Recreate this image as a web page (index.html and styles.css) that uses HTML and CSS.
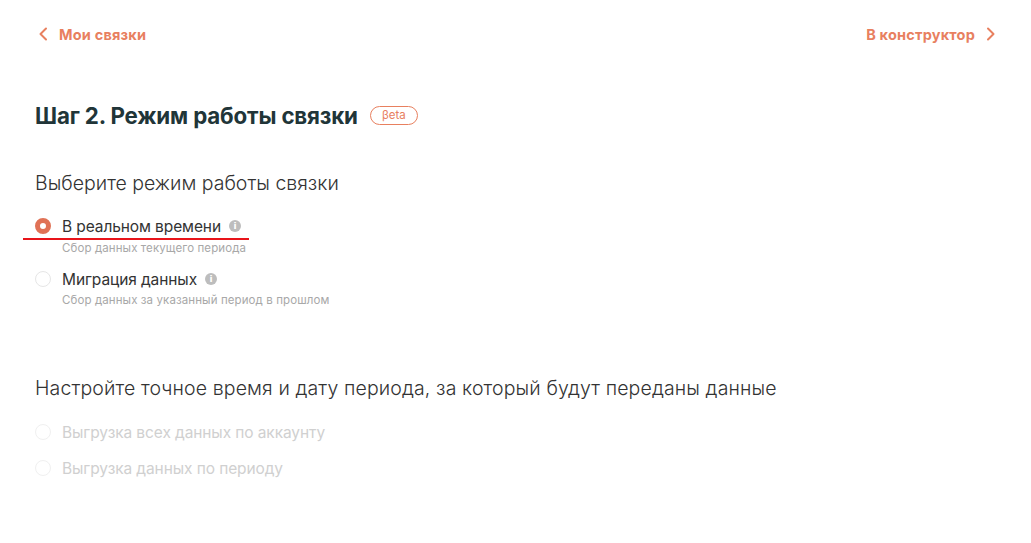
FILE: index.html
```html
<!DOCTYPE html>
<html lang="ru">
<head>
<meta charset="utf-8">
<link rel="stylesheet" href="styles.css">
</head>
<body>
<div class="page">
  <nav class="topnav">
    <a class="navlink" href="#">
      <svg class="chev" width="10" height="14" viewBox="0 0 10 14"><path d="M8 1.5 L2.5 7 L8 12.5" fill="none" stroke="currentColor" stroke-width="2" stroke-linecap="round" stroke-linejoin="round"/></svg>
      <span>Мои связки</span>
    </a>
    <a class="navlink" href="#">
      <span>В конструктор</span>
      <svg class="chev" width="10" height="14" viewBox="0 0 10 14"><path d="M2 1.5 L7.5 7 L2 12.5" fill="none" stroke="currentColor" stroke-width="2" stroke-linecap="round" stroke-linejoin="round"/></svg>
    </a>
  </nav>

  <h1 class="title">Шаг 2. Режим работы связки <span class="beta">βeta</span></h1>

  <section class="group">
    <h2 class="subtitle">Выберите режим работы связки</h2>
    <div class="option">
      <div class="option-row">
        <span class="radio checked"></span>
        <span class="label">В реальном времени</span>
        <span class="info">i</span>
      </div>
      <div class="underline"></div>
      <div class="hint">Сбор данных текущего периода</div>
    </div>
    <div class="option second">
      <div class="option-row">
        <span class="radio"></span>
        <span class="label">Миграция данных</span>
        <span class="info">i</span>
      </div>
      <div class="hint">Сбор данных за указанный период в прошлом</div>
    </div>
  </section>

  <section class="group disabled">
    <h2 class="subtitle wide">Настройте точное время и дату периода, за который будут переданы данные</h2>
    <div class="option-row dis">
      <span class="radio"></span>
      <span class="label">Выгрузка всех данных по аккаунту</span>
    </div>
    <div class="option-row dis">
      <span class="radio"></span>
      <span class="label">Выгрузка данных по периоду</span>
    </div>
  </section>
</div>
</body>
</html>
```

FILE: styles.css
```css
* { box-sizing: border-box; }
html, body { margin: 0; padding: 0; background: #fff; }
body {
  font-family: "Inter", "Noto Sans", sans-serif;
  color: #333;
}
.page {
  padding: 0 35px;
}
.topnav {
  display: flex;
  justify-content: space-between;
  align-items: center;
  height: 68px;
  padding: 0 0 0 3px;
}
.navlink {
  display: flex;
  align-items: center;
  gap: 11px;
  color: #e8805f;
  font-weight: 700;
  font-size: 14.5px;
  text-decoration: none;
  letter-spacing: 0.2px;
}
.chev { display: block; }
.title {
  margin: 33px 0 0;
  font-size: 22.3px;
  font-weight: 700;
  color: #213538;
  display: flex;
  align-items: center;
  gap: 12px;
  height: 28px;
  letter-spacing: -0.15px;
}
.beta {
  display: inline-flex;
  align-items: center;
  justify-content: center;
  width: 48px;
  height: 19px;
  border: 1px solid #e8805f;
  border-radius: 10px;
  font-size: 11.5px;
  font-weight: 400;
  color: #e8805f;
  letter-spacing: 0;
}
.group { margin-top: 42px; }
.subtitle {
  margin: 0;
  font-size: 19.5px;
  font-weight: 300;
  color: #333;
  height: 24px;
  line-height: 24px;
  letter-spacing: 0;
  white-space: nowrap;
}
.subtitle.wide { letter-spacing: 0.12px; }
.option { margin-top: 21px; }
.option.second { margin-top: 14px; }
.option-row {
  display: flex;
  align-items: center;
  height: 20px;
}
.radio {
  width: 16px;
  height: 16px;
  border-radius: 50%;
  border: 1px solid #e6e6e6;
  background: #fff;
  flex: none;
}
.radio.checked {
  border: 5px solid #e07256;
  background: #fff;
}
.label {
  margin-left: 11px;
  font-size: 15.5px;
  color: #333;
  letter-spacing: -0.1px;
}
.info {
  margin-left: 8px;
  width: 12px;
  height: 12px;
  border-radius: 50%;
  background: #bdbdbd;
  color: #fff;
  font-size: 9px;
  font-weight: 700;
  line-height: 12px;
  text-align: center;
  font-family: "DejaVu Sans", sans-serif;
}
.underline {
  margin: 2px 0 0 -12px;
  width: 226px;
  height: 2px;
  background: #e8141a;
}
.hint {
  margin: 1px 0 0 27px;
  font-size: 11.5px;
  color: #a8a8a8;
  line-height: 14px;
  letter-spacing: 0.1px;
}
.second .hint { margin-top: 4px; }
.group.disabled { margin-top: 69px; }
.disabled .option-row { margin-top: 22px; }
.disabled .option-row + .option-row { margin-top: 16px; }
.dis .radio { border-color: #f0f0f0; }
.dis .label { color: #d0d0d0; }
```
